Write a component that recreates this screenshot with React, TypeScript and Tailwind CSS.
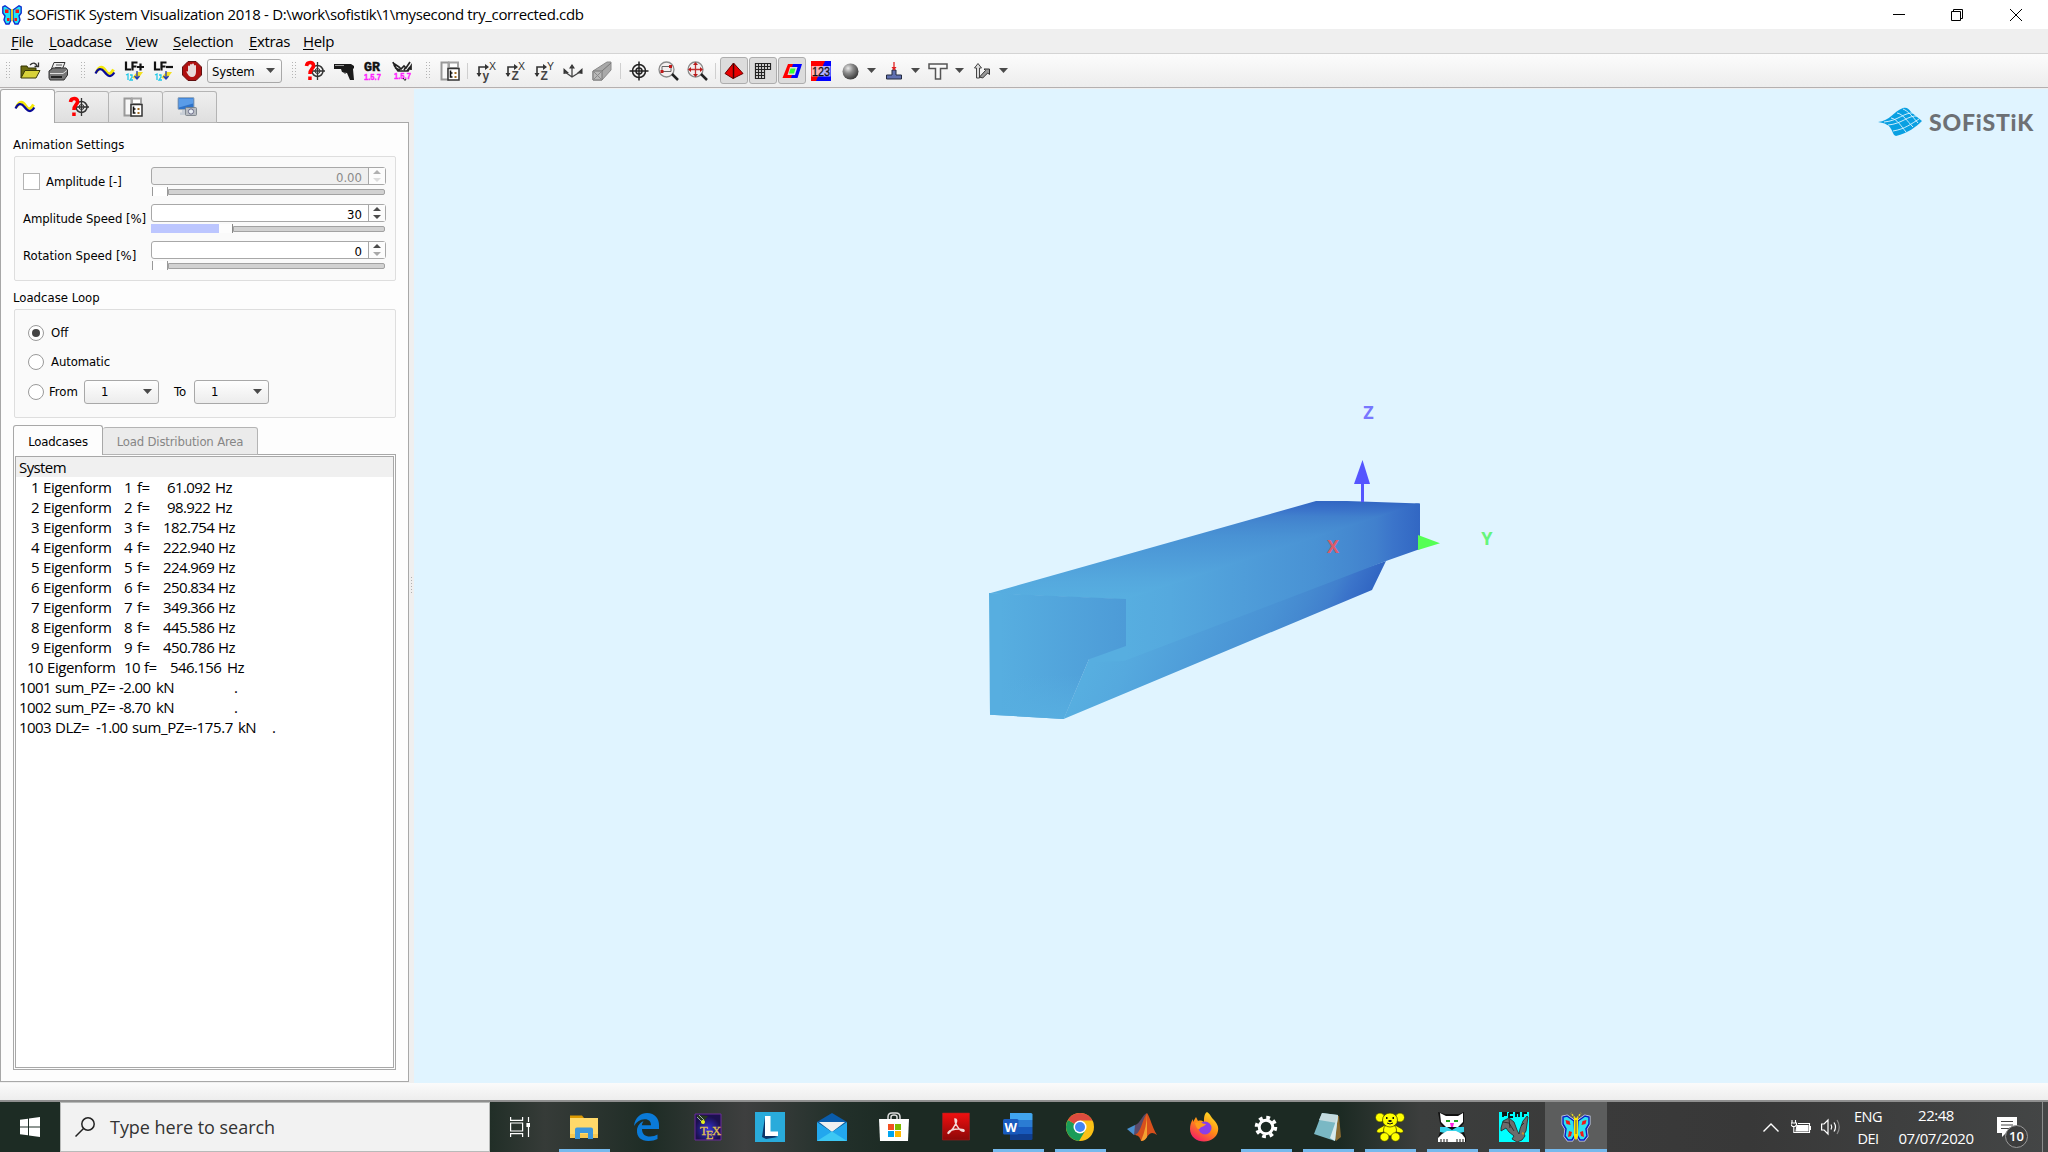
import React from "react";

type Kids = { children?: React.ReactNode; className?: string };

const I = ({ children, className = "mr-[9px]" }: Kids) => (
  <svg viewBox="0 0 20 20" className={`h-5 w-5 shrink-0 overflow-visible ${className}`} fill="none">
    {children}
  </svg>
);

const Handle = ({ className = "" }: Kids) => (
  <svg viewBox="0 0 4 18" className={`h-[18px] w-1 shrink-0 ${className}`}>
    {[0, 3, 6, 9, 12, 15].map((y) => (
      <g key={y} fill="#b4b4b4">
        <rect x="0" y={y} width="1" height="1" />
        <rect x="3" y={y} width="1" height="1" />
      </g>
    ))}
  </svg>
);

const Sep = ({ className = "" }: Kids) => <div className={`h-4 w-px shrink-0 bg-[#cfcfcf] ${className}`} />;

const Down = ({ className = "" }: Kids) => (
  <svg viewBox="0 0 9 5" className={`h-[5px] w-[9px] shrink-0 ${className}`}>
    <path d="M0 0h9L4.500 5z" fill="#4a4a4a" />
  </svg>
);

const Butterfly = ({ className = "" }: Kids) => (
  <svg viewBox="0 0 30 30" className={`shrink-0 ${className}`}>
    <g stroke="#c8d4f0" strokeWidth="3" fill="#c8d4f0">
      <path d="M13 9L6 4 2 5v7l3 5-1 7 3 4h4l3-5zM17 9l7-5 4 1v7l-3 5 1 7-3 4h-4l-3-5z" />
    </g>
    <g stroke="#0a20c0" strokeWidth="1.500" fill="#2fe0f0">
      <path d="M13 9L6 4 2 5v7l3 5-1 7 3 4h4l3-5zM17 9l7-5 4 1v7l-3 5 1 7-3 4h-4l-3-5z" />
    </g>
    <path d="M4.500 8l4 1 1 4-4-1zM25.500 8l-4 1-1 4 4-1zM8 19l3 1-1 4-3 1zM22 19l-3 1 1 4 3 1z" fill="#f01818" />
    <path d="M13 6h4v19l-2 3-2-3z" fill="#ffe600" />
    <path d="M15 8v14" stroke="#555" strokeWidth="1" />
    <path d="M14 6L10 1M16 6l4-5" stroke="#e8d820" strokeWidth="1.500" strokeDasharray="2 1" />
  </svg>
);

const TitleButterfly = ({ className = "" }: Kids) => (
  <svg viewBox="0 0 20 20" className={`shrink-0 ${className}`}>
    <path d="M9 5L3 0.800 0.800 2v6L3 11 2 15l2 4h3l2-4zM11 5l6-4.200L19.200 2v6L17 11l1 4-2 4h-3l-2-4z" fill="#20e4f4" stroke="#1030d0" strokeWidth="1.400" />
    <path d="M3 4.500h3.500V8H3zM13.500 4.500H17V8h-3.500zM5 13h2.500v3H5zM12.500 13H15v3h-2.500z" fill="#f01818" />
    <path d="M9.200 4h1.600v11L10 17l-0.800-2z" fill="#ffe600" />
  </svg>
);

const Wave = () => (
  <>
    <path d="M1.500 11c3-6 6-6 9-1.500s5 4.500 8-1" stroke="#f4e80a" strokeWidth="3" />
    <path d="M0.500 12.500C3 7.500 6 6.500 9.500 11s6.500 6 9.800 0.500" stroke="#0a0a96" strokeWidth="2.200" />
  </>
);

const Target = () => (
  <>
    <circle cx="10" cy="10" r="6.500" stroke="#222" strokeWidth="1.500" />
    <circle cx="10" cy="10" r="3" stroke="#222" strokeWidth="1.500" />
    <path d="M10 0.500v19M0.500 10h19" stroke="#222" strokeWidth="1.500" />
  </>
);

const QTarget = () => (
  <>
    <circle cx="12.500" cy="10" r="5.500" stroke="#333" strokeWidth="1.500" />
    <circle cx="12.500" cy="10" r="2.500" stroke="#333" strokeWidth="1" />
    <path d="M12.500 1v18M5 10h15" stroke="#333" strokeWidth="1.300" />
    <path d="M1.500 5C2 0.500 8.500 0.500 8.500 4.500 8.500 8 5 7.500 5 13" stroke="#ff0000" strokeWidth="3.600" />
    <rect x="3.200" y="15.500" width="3.500" height="3.500" fill="#ff0000" />
  </>
);

const Tree = () => (
  <>
    <rect x="1.500" y="1.500" width="7" height="17" fill="#f8f8f8" stroke="#999" strokeWidth="2" />
    <rect x="9" y="1.500" width="9" height="5.500" fill="#fff" stroke="#a4a4a4" strokeWidth="2" />
    <rect x="8" y="7.500" width="11" height="11.500" fill="#fff" stroke="#333" strokeWidth="1.500" />
    <path d="M10.500 9.500v6.500h2M10.500 12h2" stroke="#111" strokeWidth="1.600" />
    <path d="M14.500 11h2v2h-2zM14.500 15h2v2h-2z" fill="#a06a20" />
  </>
);

const Axes = ({ a, b }: { a: string; b: string }) => (
  <>
    <path d="M3 15V6h8" stroke="#333" strokeWidth="1.600" />
    <path d="M0.500 12l2.500 4 2.500-4zM9 3l4 3-4 3z" fill="#333" />
    <text x="13" y="9" fontSize="10.500" fill="#333" fontFamily="Liberation Sans">{a}</text>
    <text x="6.500" y="18.500" fontSize="12" fontWeight="bold" fill="#444" fontFamily="Liberation Sans">{b}</text>
  </>
);

const Computer = () => (
  <>
    <rect x="1" y="0.500" width="16" height="12" rx="1" fill="#2f73c8" stroke="#9ab" strokeWidth="1" />
    <path d="M2 1.500h14v5L2 10.500z" fill="#5a9ce8" />
    <path d="M5 13h6v2.500h1V18H3v-2.500h2z" fill="#c8ced6" />
    <rect x="8.500" y="10.500" width="11" height="8" rx="1" fill="#b8bcc2" stroke="#707880" strokeWidth="0.800" />
    <circle cx="14" cy="14.500" r="2.600" fill="#e8eef4" stroke="#557" strokeWidth="0.800" />
  </>
);

const Toggle = ({ children, className = "" }: Kids) => (
  <div className={`flex h-[27px] w-7 shrink-0 items-center justify-center rounded-[3px] border border-[#adadad] bg-[#dcdcdc] ${className}`}>
    {children}
  </div>
);

function Toolbar() {
  return (
    <div className="flex h-[34px] shrink-0 items-center border-b border-[#b4b0b0] bg-linear-to-b from-[#fcfcfc] to-[#ededed] pl-1.5">
      <Handle className="mr-2.5" />
      <I className="mr-2">
        <path d="M1 17V5h6l1 2h8v3" fill="#6b6b10" stroke="#333300" />
        <path d="M1 17L5 9.500h15L16 17z" fill="#d8d23a" stroke="#3a3a08" />
        <path d="M10 4c3-3 6-2 7 1M18.500 1.500v4h-4" stroke="#333" strokeWidth="1.300" />
      </I>
      <I className="mr-[13px]">
        <path d="M6 1.500h11L14 9H3z" fill="#eee" stroke="#333" />
        <path d="M8 4h6M7 6.500h6" stroke="#555" />
        <path d="M1 10l4-3h13l1.500 2v5L16 19H2l-1-2z" fill="#777" stroke="#333" />
        <path d="M2 12.500h13l4-3" stroke="#ddd" />
        <path d="M3 16h11" stroke="#222" strokeWidth="2" />
      </I>
      <Handle className="mr-2.5" />
      <I><Wave /></I>
      {["+", "-"].map((s) => (
        <I key={s}>
          <path d="M2 0.500V8.500h5M8.500 9.500V1.500h5M8.500 5.500h4" stroke="#111" strokeWidth="2.200" />
          <path d={s === "+" ? "M13 6h7M16.500 2.500v7" : "M13 6h7"} stroke="#111" strokeWidth="2.200" />
          <path d="M8 17l5-6h6l-5 7z" fill="#f4e020" />
          <path d="M13 10v8M10.500 15l2.500 3 2.500-3" stroke="#2038c0" strokeWidth="1.300" />
          <path d="M2 14l2-1v6M6 14h2v2L6 19h3" stroke="#20c8e8" strokeWidth="1.300" />
        </I>
      ))}
      <I className="mr-[5px]">
        <path d="M6 0.500h8l5.500 5.500v8L14 19.500H6L0.500 14V6z" fill="#b01010" stroke="#601010" />
        <path d="M6 11V5.500a1 1 0 012 0V4a1 1 0 012 0V3.500a1 1 0 012 0V5a1 1 0 012 0v6c0 3-1.500 5-4 5s-4-2-5.500-5c0-1.500 1-1 1.500 0z" fill="#e8dada" />
      </I>
      <div className="mr-2.5 flex h-6 w-[75px] shrink-0 items-center justify-between rounded-[3px] border border-[#a8a8a8] bg-linear-to-b from-[#fefefe] to-[#ececec] pl-1 pr-1.5">
        <span className="pt-px font-['DejaVu_Sans_Condensed','Noto_Sans',sans-serif] text-[13px] leading-none tracking-[-0.2px]">System</span>
        <Down className="h-1 w-2" />
      </div>
      <Handle className="mr-[9px]" />
      <I className="mr-[9px]"><QTarget /></I>
      <I>
        <path d="M0 3h17l3 2v2l-1 1 1 11h-4l-3-7-5-1-1-3H0z" fill="#1a1a1a" />
        <path d="M1 4.500h9" stroke="#999" />
        <path d="M9 9c0 4 4 4 4 1" stroke="#222" />
      </I>
      <I>
        <text x="1" y="9.500" fontSize="13" fontWeight="bold" fill="#111" stroke="#111" strokeWidth="0.500" textLength="16" lengthAdjust="spacingAndGlyphs" fontFamily="Liberation Mono">GR</text>
        <text x="1" y="19" fontSize="9.500" fontWeight="bold" fill="#ff20ff" stroke="#ff20ff" strokeWidth="0.400" textLength="17" lengthAdjust="spacingAndGlyphs" fontFamily="Liberation Sans">1.5.7</text>
      </I>
      <I className="mr-[14px]">
        <path d="M1 2l6 4 2 2 3-3 2 2 4-6M2 4l4 6h10l3-5v4M3 7l5 2M14 6l-2 3M1 1l2 5M18 6l-3 4" stroke="#222" strokeWidth="1.700" />
        <text x="2" y="18" fontSize="9.500" fontWeight="bold" fill="#ff20ff" stroke="#ff20ff" strokeWidth="0.400" textLength="17" lengthAdjust="spacingAndGlyphs" fontFamily="Liberation Sans">1.5.7</text>
        <path d="M11 17l2 2.500 1-1.500" stroke="#222" />
      </I>
      <Handle className="mr-2.5" />
      <I className="mr-[7px]"><Tree /></I>
      <Sep className="mr-2" />
      <I><Axes a="X" b="y" /></I>
      <I><Axes a="X" b="Z" /></I>
      <I><Axes a="Y" b="Z" /></I>
      <I>
        <path d="M9 3L6 7.500h6zM0.500 7v6l5.500-1zM19.500 7v6l-5.500-1z" fill="#333" />
        <path d="M9 5v10M2 11l7 5 8-5" stroke="#444" strokeWidth="1.300" />
      </I>
      <I className="mr-2">
        <path d="M1 10L15 1h4v8L10 19H1z" fill="#a9a9a9" stroke="#8a8a8a" />
        <path d="M1 10h9v9H1zM10 10l9-8" fill="#b8b8b8" stroke="#777" />
        <path d="M1 10l9 9M10 10l-9 9" stroke="#8a8a8a" />
      </I>
      <Sep className="mr-2" />
      <I><Target /></I>
      <I>
        <circle cx="8.500" cy="8.500" r="7.500" fill="#f4f0f0" stroke="#8a8a8a" strokeWidth="1.300" />
        <path d="M14 13l6 6" stroke="#222" strokeWidth="2.500" />
        <path d="M4 10.500V5.500h9v5z" stroke="#666" />
        <path d="M2.500 9h3v3h-3zM11 4h3v3h-3z" fill="#c01818" />
      </I>
      <I className="mr-2">
        <circle cx="8.500" cy="8.500" r="7.500" fill="#f4f0f0" stroke="#8a8a8a" strokeWidth="1.300" />
        <path d="M14 13l6 6" stroke="#222" strokeWidth="2.500" />
        <path d="M8.500 3v11M3 8.500h11" stroke="#c03030" strokeWidth="1.300" />
        <path d="M8.500 1l2.500 3h-5zM8.500 16l2.500-3h-5zM1 8.500L4 6v5zM16 8.500L13 6v5z" fill="#b81818" />
      </I>
      <Sep className="mr-1" />
      <Toggle className="mr-px">
        <I className="">
          <path d="M9.500 2L1 12.500l8 5 10-5z" fill="#e80000" stroke="#600" />
          <path d="M9.500 2.500v15" stroke="#400" strokeWidth="1.500" />
        </I>
      </Toggle>
      <Toggle className="mr-px">
        <I className="">
          <path d="M2.500 2.500h15v6h-6v9h-9zM2.500 5.500h15M2.500 8.500h9M2.500 11.500h9M2.500 14.500h9M5.500 2.500v15M8.500 2.500v15M11.500 2.500v6M14.500 2.500v6" stroke="#222" strokeWidth="1.200" />
        </I>
      </Toggle>
      <Toggle className="mr-[5px]">
        <I className="">
          <path d="M6 3H12L11 6H8L5.500 14H11L10 17H0.500z" fill="#f00" />
          <path d="M11 3h9L15.500 17H9l1-3h3l2.500-8H10z" fill="#0000ff" />
          <path d="M8.500 7.500h5l-1.500 5H7z" fill="#30ff30" />
        </I>
      </Toggle>
      <I>
        <rect width="20" height="20" fill="#0000ff" />
        <path d="M0 0h14L5 20H0z" fill="#ff0000" />
        <path d="M0.500 5h19v10.500h-19z" fill="#fff" fillOpacity="0.700" />
        <text x="1" y="14.500" fontSize="12" fill="#111" stroke="#111" strokeWidth="0.300" textLength="18" lengthAdjust="spacingAndGlyphs" fontFamily="Liberation Sans">123</text>
      </I>
      <I className="mr-[7px]">
        <defs>
          <radialGradient id="sph" cx="0.350" cy="0.300" r="0.800">
            <stop offset="0" stopColor="#e8e8e8" />
            <stop offset="0.400" stopColor="#8a8a8a" />
            <stop offset="1" stopColor="#2c2c2c" />
          </radialGradient>
        </defs>
        <circle cx="10.500" cy="10.500" r="8" fill="url(#sph)" />
      </I>
      <Down className="mr-2" />
      <I className="mr-[7px]">
        <path d="M8 9h4v5h5.500v4h-15v-4H8z" fill="#6070b0" stroke="#222a40" />
        <path d="M10 1v8" stroke="#e02020" strokeWidth="1.300" />
        <path d="M7.500 6h5L10 9.500z" fill="#e02020" />
      </I>
      <Down className="mr-2" />
      <I className="mr-[7px]">
        <path d="M1 3h18v4.500h-6.500V18h-5V7.500H1z" fill="#fafafa" stroke="#555" strokeWidth="1.500" />
      </I>
      <Down className="mr-2" />
      <I className="mr-[7px]">
        <path d="M6 2.500L2.500 7h2v10h3V7h2z" fill="#ddd" stroke="#444" />
        <path d="M7.500 16l6-6.500-1.500-1.500H17.500v5.500l-1.800-1.500-5 5z" fill="#999" stroke="#333" />
      </I>
      <Down />
    </div>
  );
}

const Spin = ({ value, off, low }: { value: string; off?: boolean; low?: boolean }) => (
  <div className={`flex h-[18px] w-[235px] items-stretch rounded-[3px] border border-[#a8a8a8] ${off ? "bg-[#efefef] text-[#8a8a8a]" : "bg-white"}`}>
    <span className="flex-1 pr-1.5 pt-[3px] text-right leading-[14px]">{value}</span>
    <div className="flex w-[17px] items-center justify-center border-l border-[#a8a8a8] bg-[#fcfcfc]">
      <svg viewBox="0 0 8 12" className="h-3 w-2">
        <path d="M0 4h8L4 0z" fill={off ? "#b0b0b0" : "#4a4a4a"} />
        <path d="M0 8h8l-4 4z" fill={off ? "#dcdcdc" : low ? "#a8a8a8" : "#4a4a4a"} />
      </svg>
    </div>
  </div>
);

const Slider = ({ filled }: { filled?: boolean }) => (
  <div className="mt-0.5 flex h-[9px] w-[234px] items-center">
    {filled ? (
      <>
        <div className="h-full w-[68px] bg-[#bcc6ff]" />
        <div className="h-full w-[14px] border-r border-[#888] bg-[#fdfdfd]" />
      </>
    ) : (
      <div className="ml-px h-full w-4 border-x border-[#999] bg-white" />
    )}
    <div className="h-1.5 flex-1 rounded-r-[2px] border border-[#a2a2a2] bg-[#d2d2d2]" />
  </div>
);

const Row = ({ label, check, className = "", ...spin }: { label: string; check?: boolean; className?: string; value: string; off?: boolean; low?: boolean; filled?: boolean }) => (
  <div className="flex h-[37px] items-start">
    <div className="flex h-[29px] w-32 shrink-0 items-center">
      {check && <div className="mr-1.5 h-[17px] w-[17px] border border-[#b4b4b4] bg-white" />}
      <span className={`whitespace-nowrap ${className}`}>{label}</span>
    </div>
    <div>
      <Spin value={spin.value} off={spin.off} low={spin.low} />
      <Slider filled={spin.filled} />
    </div>
  </div>
);

const Radio = ({ on }: { on?: boolean }) => (
  <div className="flex h-4 w-4 shrink-0 items-center justify-center rounded-full border border-[#9a9a9a] bg-white">
    {on && <div className="h-2 w-2 rounded-full bg-[#444]" />}
  </div>
);

const Combo = () => (
  <div className="flex h-6 w-[75px] items-center justify-between rounded-[3px] border border-[#a8a8a8] bg-linear-to-b from-[#fefefe] to-[#ececec] pl-4 pr-1.5">
    <span>1</span>
    <Down className="h-1 w-2" />
  </div>
);

const freqs = ["61.092", "98.922", "182.754", "222.940", "224.969", "250.834", "349.366", "445.586", "450.786"];

function Loadcases() {
  return (
    <div className="flex-1 border border-[#a8a8a8] p-px">
      <div className="h-full border border-[#a8a8a8] bg-white font-['Open_Sans',sans-serif] text-[15px] leading-5 tracking-[-0.6px] whitespace-pre">
        <div className="h-5 bg-[#f0f0f0] pl-[3px]">System</div>
        {freqs.map((f, i) => (
          <div key={f} className="flex h-5 pl-[15px]">
            <span className="w-3">{i + 1}</span>
            <span className="w-[81px] tracking-[-0.4px]">Eigenform</span>
            <span className="w-[13px]">{i + 1}</span>
            <span className={f.length === 6 ? "w-[30px]" : "w-[26px]"}>f=</span>
            <span className={f.length === 6 ? "w-12" : "w-[55px]"}>{f}</span>
            <span>Hz</span>
          </div>
        ))}
        <div className="flex h-5 pl-[11px]">
          <span className="w-5">10</span>
          <span className="w-[77px] tracking-[-0.4px]">Eigenform</span>
          <span className="w-5">10</span>
          <span className="w-[26px]">f=</span>
          <span className="w-[57px]">546.156</span>
          <span>Hz</span>
        </div>
        {["-2.00", "-8.70"].map((v, i) => (
          <div key={v} className="flex h-5 pl-[3px]">
            <span className="w-9">{1001 + i}</span>
            <span className="w-16 tracking-[-0.4px]">sum_PZ=</span>
            <span className="w-[37px]">{v}</span>
            <span className="w-[78px]">kN</span>
            <span>.</span>
          </div>
        ))}
        <div className="flex h-5 pl-[3px]">
          <span className="w-9">1003</span>
          <span className="w-[41px] tracking-[-0.4px]">DLZ=</span>
          <span className="w-9">-1.00</span>
          <span className="w-[106px] tracking-[-0.4px]">sum_PZ=-175.7</span>
          <span className="w-[34px]">kN</span>
          <span>.</span>
        </div>
      </div>
    </div>
  );
}

function SidePanel() {
  return (
    <div className="flex w-[409px] shrink-0 flex-col bg-[#efefef] pb-px font-['DejaVu_Sans_Condensed','Noto_Sans',sans-serif] text-[13px]">
      <div className="z-10 -mb-px flex h-[34px] shrink-0 items-end">
        <div className="flex h-[34px] w-[55px] justify-center rounded-t-[3px] border border-b-0 border-[#a8a8a8] bg-[#fdfdfd] pr-[5px] pt-1.5"><I className=""><Wave /></I></div>
        {[<QTarget key="q" />, <Tree key="t" />, <Computer key="c" />].map((ic, i) => (
          <div key={i} className="flex h-8 w-[54px] items-center justify-center self-end rounded-t-[3px] border border-l-0 border-[#b4b4b4] bg-linear-to-b from-[#efefef] to-[#dfdfdf] pr-1.5"><I className="">{ic}</I></div>
        ))}
      </div>
      <div className="flex flex-1 flex-col border border-[#a8a8a8] bg-[#fdfdfd] pr-3 pb-[11px] pl-3 pt-3">
        <div className="h-[21px] leading-5">Animation Settings</div>
        <div className="ml-px h-[125px] w-[382px] rounded-[2px] border border-[#dedede] bg-[#fafafa] pl-2 pt-2.5">
          <Row label="Amplitude [-]" check value="0.00" off className="tracking-[-0.1px]" />
          <Row label="Amplitude Speed [%]" value="30" filled className="tracking-[-0.07px]" />
          <Row label="Rotation Speed [%]" value="0" low />
        </div>
        <div className="mt-[7px] h-[21px] leading-5">Loadcase Loop</div>
        <div className="ml-px h-[109px] w-[382px] rounded-[2px] border border-[#dedede] bg-[#fafafa] pl-[13px] pt-2">
          <div className="flex h-[29px] items-center gap-[7px] pt-px"><Radio on />Off</div>
          <div className="flex h-[29px] items-center gap-[7px] pt-px tracking-[-0.1px]"><Radio />Automatic</div>
          <div className="flex h-[31px] items-center">
            <Radio />
            <span className="ml-[5px] w-[35px]">From</span>
            <Combo />
            <span className="ml-[15px] w-5">To</span>
            <Combo />
          </div>
        </div>
        <div className="z-10 -mb-px mt-[7px] flex h-[30px] shrink-0 items-end">
          <div className="flex h-[30px] w-[90px] items-center justify-center rounded-t-[3px] border border-b-0 border-[#a8a8a8] bg-[#fdfdfd] pt-0.5 tracking-[-0.15px]">Loadcases</div>
          <div className="flex h-7 w-[155px] items-center justify-center self-end rounded-t-[3px] border border-l-0 border-[#b4b4b4] bg-[#ebebeb] pt-0.5 tracking-[-0.18px] text-[#868686]">Load Distribution Area</div>
        </div>
        <Loadcases />
      </div>
    </div>
  );
}

const stops = [
  [0, "#3267c3"],
  [0.09, "#3b74ca"],
  [0.15, "#4180cd"],
  [0.24, "#4589d0"],
  [0.36, "#4992d4"],
  [0.6, "#4f9dd9"],
  [0.85, "#55a9de"],
  [1, "#57aee0"],
] as const;

const Stops = () => (
  <>
    {stops.map(([o, c]) => (
      <stop key={o} offset={o} stopColor={c} />
    ))}
  </>
);

function Viewport() {
  return (
    <div className="relative flex-1 bg-[#e0f4ff]">
      <svg viewBox="414 89 1634 994" className="h-full w-full">
        <defs>
          <linearGradient id="top" gradientUnits="userSpaceOnUse" x1="1340" y1="502" x2="1339" y2="599"><Stops /></linearGradient>
          <linearGradient id="side" gradientUnits="userSpaceOnUse" x1="1420" y1="0" x2="1126" y2="0"><Stops /></linearGradient>
          <linearGradient id="web" gradientUnits="userSpaceOnUse" x1="1278" y1="784" x2="1080" y2="690"><Stops /></linearGradient>
          <linearGradient id="front" gradientUnits="userSpaceOnUse" x1="1000" y1="0" x2="1126" y2="0">
            <stop offset="0" stopColor="#57aee0" />
            <stop offset="1" stopColor="#4d9bd7" />
          </linearGradient>
          <linearGradient id="foot" x1="0" y1="0" x2="0" y2="1">
            <stop offset="0.650" stopColor="#57aee0" stopOpacity="0" />
            <stop offset="1" stopColor="#57aee0" />
          </linearGradient>
        </defs>
        <path d="M1089 659L1124 650 1386 561 1372 590 1063.600 719z" fill="url(#web)" />
        <path d="M1125 596L1416 503.500H1420V549L1386 561 1124 661 1089 662V655L1125 645z" fill="url(#side)" />
        <path d="M989 593.500L1316 501H1347L1420 503.500 1126 599.500z" fill="url(#top)" />
        {["url(#front)", "url(#foot)"].map((f) => (
          <path key={f} d="M989 593L1126 599V646L1089 659.300 1063.600 719 990 714.700z" fill={f} />
        ))}
        <path d="M1362.500 460L1370 484H1354z" fill="#5555ff" />
        <path d="M1361 484h3v18h-3z" fill="#5555ff" />
        <path d="M1418 535L1440 543.300 1418 550z" fill="#55ff55" />
        <g fontFamily="Noto Sans, sans-serif" fontWeight="bold" fontSize="18" textAnchor="middle">
          <text x="1368.500" y="419" fill="#7777ff">Z</text>
          <text x="1333" y="553" fill="#dc5c6c">X</text>
          <text x="1487" y="545" fill="#66f57c">Y</text>
        </g>
      </svg>
      <div className="absolute right-[14px] top-[18px] flex items-center">
        <svg viewBox="0 0 44 30" className="mr-[7px] h-[30px] w-11">
          <path d="M0 15C12 14 16 4 25 1c4-1 6 1 8 4l11 9c-6 6-14 12-26 15-3-1-3-4-5-7-2-4-6-6-13-7z" fill="#0aa0e2" />
          <path d="M6 15c14-1 20-10 30-9M10 18c14-1 20-10 30-9M15 24c12-2 18-7 26-12M13 11c6 1 10 8 15 14M19 6c6 1 10 8 16 14M25 2c5 2 9 7 15 14" stroke="#dff4ff" strokeWidth="0.900" fill="none" />
        </svg>
        <span className="pt-px font-[Lato,sans-serif] text-[23px] font-black leading-none tracking-[0.8px] text-[#6d7074]">SOFiSTiK</span>
      </div>
    </div>
  );
}

const Cell = ({ children, run, active }: { children: React.ReactNode; run?: boolean; active?: boolean }) => (
  <div className={`flex h-full w-[62px] shrink-0 flex-col items-center ${active ? "bg-[#5c5d5d]" : ""}`}>
    <div className="flex h-[47px] items-center pt-0.5">{children}</div>
    {run && <div className={`h-[3px] bg-[#76b9ed] ${active ? "w-full" : "w-[51px]"}`} />}
  </div>
);

const A = ({ children }: Kids) => <svg viewBox="0 0 30 30" className="h-[30px] w-[30px]" fill="none">{children}</svg>;

function Taskbar() {
  return (
    <div className="flex h-[50px] shrink-0 bg-[linear-gradient(90deg,#1d2c24_0,#1d2c24_480px,#363b38_545px,#1e2c25_650px,#3e3f3f_745px,#22302a_840px,#1c2a23_900px,#1c2a23_1340px,#3c3e3d_1420px,#3a3a3a_1600px,#383838_1750px,#444646_2048px)] font-['Open_Sans',sans-serif] text-white">
      <div className="flex w-[60px] items-center justify-center">
        <svg viewBox="0 0 20 20" className="h-5 w-5 fill-white"><path d="M0 2.800L8 1.700V9.500H0zM9 1.500L20 0v9.500H9zM0 10.500h8v7.800L0 17.200zM9 10.500h11V20L9 18.500z" /></svg>
      </div>
      <div className="flex w-[430px] items-center border border-[#b8bab9] bg-[#f2f2f2] pl-[14px] text-[#333]">
        <svg viewBox="0 0 20 20" className="mr-[15px] h-5 w-5" fill="none" stroke="#222" strokeWidth="1.500"><circle cx="13" cy="7" r="6.200" /><path d="M8.500 11.500L0.500 19.500" /></svg>
        <span className="text-[18px] tracking-[-0.03px]">Type here to search</span>
      </div>
      <div className="flex w-[63px] items-center pl-5">
        <svg viewBox="0 0 20 20" className="h-5 w-5" fill="none" stroke="#fff" strokeWidth="1.200"><path d="M0.600 0v3.400h12V0M0.600 20v-3.400h12V20M0.600 6h12v8h-12zM18.500 0v5M18.500 10v10" /><path d="M17 6.500h3v3h-3z" fill="#fff" /></svg>
      </div>
      <Cell run><A><path d="M1 3.500h12l2 2.500H1z" fill="#dd9a00" /><path d="M1 6h28v20H1z" fill="#ffd96a" /><path d="M1 22h28v4H1z" fill="#f8c850" /><path d="M6 27V17.500q0-2 2-2h14q2 0 2 2V27h-5v-6h-8v6z" fill="#3d97dc" /></A></Cell>
      <Cell><A><path d="M3 14C4 5 10 1 16 1c8 0 12 6 12 12v4H11c0 5 3 7.500 8 7.500 3 0 5.500-1 7.500-2V27c-2.500 1.300-5.500 2-9 2C10 29 5.500 25 6 18c.300-4 3-7.500 6.500-8.800-1 1.200-1.500 2.600-1.700 4H20c0-3.700-2.200-6-6-6C9 7 5.500 10 3 14z" fill="#0a7ad8" /></A></Cell>
      <Cell>
        <A>
          <defs><radialGradient id="tx" cx="0.500" cy="0.600"><stop offset="0" stopColor="#3434d8" /><stop offset="1" stopColor="#1c1050" /></radialGradient></defs>
          <path d="M2 2h26v26H2z" fill="url(#tx)" stroke="#6a2a9a" />
          <path d="M3 3l12 1-6 8z" fill="#26381c" /><path d="M4 5l7 7M6 3l5 5" stroke="#9aa" /><circle cx="10" cy="10" r="2" fill="#e8f020" />
          <g fill="#e0c050" stroke="#e0c050" strokeWidth="0.300" fontFamily="Liberation Serif">
            <text x="7" y="23" fontSize="12.500">T</text>
            <text x="13" y="27" fontSize="12">E</text>
            <text x="19" y="23" fontSize="12.500">X</text>
          </g>
        </A>
      </Cell>
      <Cell><A><path d="M0 0h30v30H0z" fill="#29abdb" /><path d="M10 5L7 25l4 2 12-2-13-4z" fill="#0c3468" /><path d="M10 4h5.500v15.500H23V24H10z" fill="#fff" /></A></Cell>
      <Cell><A><path d="M0 10L15 1l15 9-15 10z" fill="#0a5cab" /><path d="M2 10h26L15 20z" fill="#f0f0f0" /><path d="M0 10l15 10L30 10v19H0z" fill="#22a7ee" /><path d="M0 29l15-9.500L30 29z" fill="#3dc8f4" /></A></Cell>
      <Cell><A><path d="M9 8V5q0-4 4-4h4q4 0 4 4v3M12 8V5q0-2 3-2t3 2v3" stroke="#ddd" strokeWidth="1.500" /><path d="M0 7h30l-1 22H1z" fill="#fff" /><path d="M9 12h6v6H9z" fill="#f25022" /><path d="M16 12h6v6h-6z" fill="#7fba00" /><path d="M9 19h6v6H9z" fill="#00a4ef" /><path d="M16 19h6v6h-6z" fill="#ffb900" /></A></Cell>
      <Cell>
        <A>
          <defs><linearGradient id="pdf" x1="0" y1="0" x2="0" y2="1"><stop offset="0" stopColor="#f01010" /><stop offset="1" stopColor="#8c0808" /></linearGradient></defs>
          <path d="M1.500 1h27v27h-27z" fill="url(#pdf)" stroke="#a02020" strokeWidth="0.600" />
          <path d="M14 7c4 0 0 8-6 14-2 1.500-1-2 3-3 5-1.500 13-1 12 1-2 2-9-5-9-12z" stroke="#f4dada" strokeWidth="1.500" />
        </A>
      </Cell>
      <Cell run><A><path d="M7 1h21q1.500 0 1.500 1.500V8H7z" fill="#41a5ee" /><path d="M7 8h22.500v7H7z" fill="#2b7cd3" /><path d="M7 15h22.500v7H7z" fill="#185abd" /><path d="M7 22h22.500v5q0 1-1.500 1H7z" fill="#103f91" /><rect x="0" y="7" width="15.500" height="15.500" rx="1.500" fill="#185abd" /><text x="1.500" y="19.500" fontSize="13" fontWeight="bold" fill="#fff" textLength="12.500" lengthAdjust="spacingAndGlyphs" fontFamily="Open Sans">W</text></A></Cell>
      <Cell run><A><circle cx="15" cy="15" r="14" fill="#fbc116" /><path d="M15 15l-12.100-7A14 14 0 0014 29l6-10z" fill="#1a9c58" /><path d="M15 15L2.900 8A14 14 0 0127.500 8.500H15z" fill="#dd4b3e" /><circle cx="15" cy="15" r="6.500" fill="#fff" /><circle cx="15" cy="15" r="5" fill="#4285f4" /></A></Cell>
      <Cell><A><path d="M0 17l8-4 4 4-5 6z" fill="#4a90d0" /><path d="M8 13c5-1 7-10 12-12L12 22l-5 1z" fill="#5a4a6a" /><path d="M20 1c3 4 5 14 10 22-4-3-7-3-10 2-2 3-4 4-6 4-1-4-3-6-7-6C14 22 15 8 20 1z" fill="#d8501c" /><path d="M20 1c0 9-2 18-6 28 2 0 4-1 6-4z" fill="#f4a030" /></A></Cell>
      <Cell>
        <A>
          <defs><linearGradient id="fx" x1="0.800" y1="0" x2="0.200" y2="1"><stop offset="0" stopColor="#ffe226" /><stop offset="0.500" stopColor="#ff8a16" /><stop offset="1" stopColor="#f5156c" /></linearGradient></defs>
          <path d="M18 0c4 3 4 5 6 7 4 4 6 8 5 12-1 6-7 10.500-14 10.500S1 25 1 17c0-4 1-7 3-10v3l3-5 2 4c2-1 5 0 6 1 0-4 0-8 3-10z" fill="url(#fx)" />
          <circle cx="16" cy="16" r="6.500" fill="#8a3ee8" /><path d="M6 11c4-2 7 1 11 1-2 3-4 2-6 4-1 3-4 0-5-5z" fill="#ff9a1c" />
        </A>
      </Cell>
      <Cell run><A><g stroke="#fff"><circle cx="15" cy="15" r="6.800" strokeWidth="3" /><circle cx="15" cy="15" r="9.500" strokeWidth="3.500" strokeDasharray="3.730 3.730" /></g></A></Cell>
      <Cell run><A><path d="M10 2L26 4l2 21-5 4z" fill="#8a6a30" /><path d="M9 1l16 2-3 26L1 22z" fill="#7ab8c4" /><path d="M9 1l16 2-1 8L6 8z" fill="#c4dade" /><path d="M17 26l5 3 3-26z" fill="#d8eaec" /></A></Cell>
      <Cell run><A><g fill="#ffff00" stroke="#3a3a00" strokeWidth="0.700"><circle cx="5" cy="5.500" r="4.500" /><circle cx="25" cy="5.500" r="4.500" /><path d="M10 13L3 17q-3 3 1 4 4 0 7-3zM20 13l7 4q3 3-1 4-4 0-7-3z" /><ellipse cx="15" cy="18" rx="6.500" ry="6" /><ellipse cx="9.500" cy="25" rx="4.500" ry="4.300" /><ellipse cx="20.500" cy="25" rx="4.500" ry="4.300" /><ellipse cx="15" cy="8" rx="7.500" ry="7" /></g><path d="M11 5h1.500v2H11zM17.500 5H19v2h-1.500zM13.500 8h3v2h-3z" fill="#111" /><path d="M12 11q3 2 6 0" stroke="#111" /></A></Cell>
      <Cell run><A><path d="M1 0l7 2h14l5-2v11l-3 4 3 2v3l2 6v4H1v-4l2-6v-3l3-2-3-4z" fill="#111" /><path d="M3 1l6 3h12l5-3v9l-5 5H9l-5-5z" fill="#fff" /><path d="M3 15l7 0 5 3 5-3 7 0v5l-5 1H8l-5-1z" fill="#38d4ea" /><path d="M10 19h9l6 3 3 4v4H1v-4l4-4z" fill="#fff" /><path d="M9 8h4v2H9zM17 8h4v2h-4z" fill="#20a020" /><path d="M13 11h4l-1 4h-2z" fill="#ff20e0" /><path d="M4 27v3M7 27v3M10 27v3M20 27v3M23 27v3M26 27v3" stroke="#111" /></A></Cell>
      <Cell run><A><path d="M0 0h30v30H0z" fill="#00ffff" /><path d="M3 1h5M4 1v4M4 3h4M10 1v4h4M10 1h4M17 5V1h3v4M24 0v5M24 1h4" stroke="#111" strokeWidth="1.800" /><path d="M2 16l2-7 6-3 5 4 3 8 2 4 1-5 3-8 4-5 1 1-2 14-2 3 1 2-3 4-5 2-5-3 2-3-5-4-3-4-5 3z" fill="#6c6c6c" stroke="#222" strokeWidth="0.800" /><path d="M4 10l6 1 5 8M10 7l1 9M22 14l3-3" stroke="#222" strokeWidth="0.800" /><path d="M23 21l2 1" stroke="#c89030" strokeWidth="2" /></A></Cell>
      <Cell run active><Butterfly className="h-[30px] w-[30px]" /></Cell>
      <div className="flex flex-1 items-center justify-end">
        <svg viewBox="0 0 16 9" className="mr-3 h-[9px] w-4" fill="none" stroke="#fff" strokeWidth="1.400"><path d="M0.500 8.500L8 1l7.500 7.500" /></svg>
        <svg viewBox="0 0 20 14" className="mr-2.5 h-[14px] w-5" fill="none" stroke="#fff" strokeWidth="1.100"><path d="M1 0v2.500M4.500 0v2.500M0 3h5.500v2L4 6.500H1.500L0 5zM2.800 6.500V12.500H18.500V3.500H7" /><path d="M6 5.500h11v5.500H5z" fill="#fff" /><path d="M19.500 6v4" /></svg>
        <svg viewBox="0 0 20 18" className="mr-[11px] h-[18px] w-5" fill="none" stroke="#fff" strokeWidth="1.200"><path d="M0.600 6v6h2.500L7 16V2L3.100 6z" /><path d="M10 6.500q1.500 2.500 0 5M13 4.500q3 4.500 0 9" /><path d="M16 2q4.500 7 0 14" stroke="#888" /></svg>
        <div className="w-[32px] pt-px text-center text-[14.500px] leading-[22px] tracking-[-0.5px]">
          <div>ENG</div>
          <div>DEI</div>
        </div>
        <div className="ml-[12px] w-[80px] text-center text-[15px] leading-[23px] tracking-[-0.45px] whitespace-nowrap">
          <div>22:48</div>
          <div>07/07/2020</div>
        </div>
        <div className="relative ml-[21px] mr-[25px] h-5 w-5">
          <svg viewBox="0 0 20 20" className="h-5 w-5"><path d="M0 0h20v16H9l-4 4v-4H0z" fill="#fff" /><path d="M4 4.500h12M4 8h12M4 11.500h9" stroke="#444" strokeWidth="1.200" /></svg>
          <div className="absolute left-2 top-2 flex h-[23px] w-[23px] items-center justify-center rounded-full border border-[#999] bg-[#3c3d3d] text-[13px] font-semibold leading-none">10</div>
        </div>
        <div className="mr-[5px] h-full w-px bg-[#8a8b8b]" />
      </div>
    </div>
  );
}

const menu = ["File", "Loadcase", "View", "Selection", "Extras", "Help"];
const menuWidths = ["w-[38px]", "w-[77px]", "w-[47px]", "w-[76px]", "w-[54px]", "w-10"];

export default function App() {
  return (
    <div className="flex h-[1152px] w-[2048px] flex-col overflow-hidden bg-[#efefef] text-black">
      <div className="flex h-[29px] shrink-0 items-center bg-white pl-0.5 pr-[26px] font-['Open_Sans',sans-serif]">
        <TitleButterfly className="mr-[5px] h-5 w-5" />
        <span className="flex-1 text-[15px] tracking-[-0.34px]">SOFiSTiK System Visualization 2018 - D:\work\sofistik\1\mysecond try_corrected.cdb</span>
        <svg viewBox="0 0 129 12" className="h-3 w-[129px]" fill="none" stroke="#000" strokeWidth="1"><path d="M0 5.500h12M58.500 2.500h9v9h-9zM60.500 2.500v-2h9v9h-2M117 0l12 12M129 0l-12 12" /></svg>
      </div>
      <div className="flex h-[25px] shrink-0 items-center border-b border-[#d4d4d4] pl-[11px] font-['Open_Sans',sans-serif] text-[15px] tracking-[-0.34px]">
        {menu.map((m, i) => (
          <span key={m} className={`whitespace-nowrap ${menuWidths[i]}`}><span className="underline underline-offset-2">{m[0]}</span>{m.slice(1)}</span>
        ))}
      </div>
      <Toolbar />
      <div className="flex min-h-0 flex-1 pt-px">
        <SidePanel />
        <div className="flex w-[5px] shrink-0 items-center justify-center">
          <svg viewBox="0 0 2 18" className="h-[18px] w-0.5">{[0, 3, 6, 9, 12, 15].map((y) => <rect key={y} x="0" y={y} width="1" height="1" fill="#b0b0b0" />)}</svg>
        </div>
        <Viewport />
      </div>
      <div className="h-[19px] shrink-0 border-b-2 border-[#8f8f8f] bg-linear-to-b from-[#fbfbfb] to-[#ededed]" />
      <Taskbar />
    </div>
  );
}
